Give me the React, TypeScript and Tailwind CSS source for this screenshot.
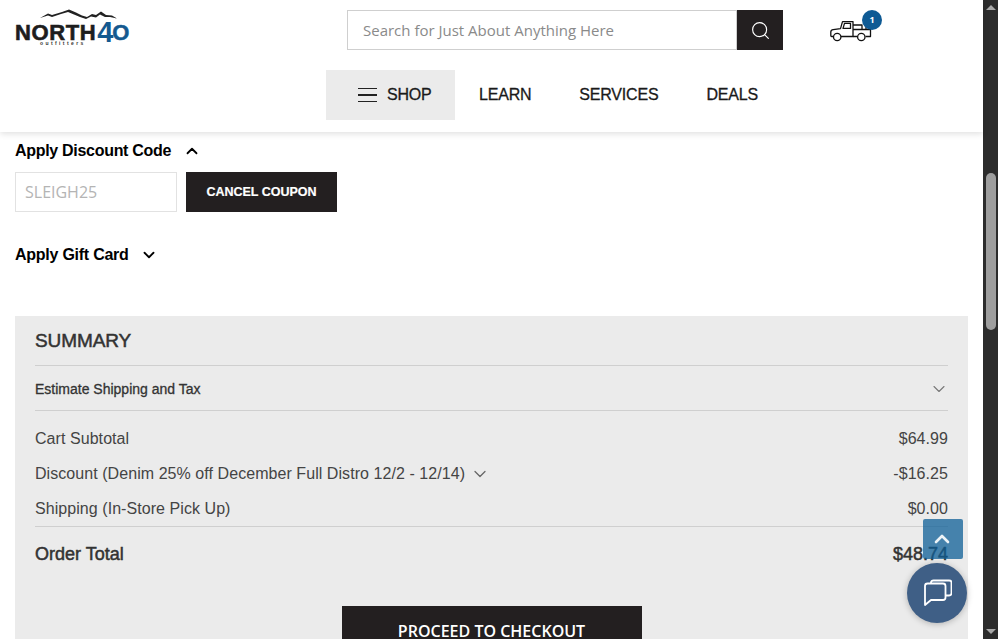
import { ChevronDown, ChevronUp, Search } from "lucide-react";

const SANS = "font-['Liberation_Sans',Arial,sans-serif]";
const OPEN = "font-['Open_Sans',sans-serif]";

function Truck() {
  return (
    <svg width="42" height="22" viewBox="0 0 42 22" fill="none" stroke="#111" strokeWidth="1.3" strokeLinejoin="round">
      <path d="M3.2 16.5H1.6C1 16.5 .8 16 .8 15.5V12C.8 10.6 1.8 9.8 3.2 9.6L10.5 8.6L12.5 1.6H23V16.5H11" />
      <path d="M14.5 3.4L13 8.4H20.5V3.4Z" />
      <path d="M23 5H32V9.5M23 9.5H40.5V16.5H35.5M23 16.5H27" />
      <path d="M36 9.5V7" />
      <circle cx="7.2" cy="17" r="3.7" />
      <circle cx="31.3" cy="17" r="3.7" />
    </svg>
  );
}

function Logo() {
  return (
    <div className="relative h-[36px] w-[116px]">
      <svg className="absolute left-[25px] top-0" width="78" height="10" viewBox="0 0 78 10" fill="#222">
        <path d="M0 9L8 4.5L12 6L22 3L29 0.5L36 3.5L42 6.5L47 8L52 5L56 6L61 2.5L66 6L72 6.5L77 9.5L70 8L65 8L60 5.5L56 8.5L51 7.5L46 10L40 8L34 5.5L28 3L21 5L12 8L8 6.5Z" />
      </svg>
      <div className={`absolute left-0 top-[10px] flex h-[26px] items-center font-bold ${SANS}`}>
        <span className="text-[22px] leading-[17px] tracking-[0.6px] text-[#1d1d1d] [-webkit-text-stroke:0.6px_#1d1d1d]">NORTH</span>
        <span className="ml-[1px] text-[29px] leading-[17px] text-[#14598f]">4</span>
        <span className="ml-[-1px] text-[22px] leading-[17px] text-[#14598f] [-webkit-text-stroke:0.5px_#14598f]">O</span>
      </div>
      <div className={`absolute left-[25px] top-[32px] text-[5px] font-bold leading-[5px] tracking-[2.4px] text-[#333] ${SANS}`}>
        outfitters
      </div>
    </div>
  );
}

const TOTALS = [
  { label: "Cart Subtotal", value: "$64.99" },
  { label: "Discount (Denim 25% off December Full Distro 12/2 - 12/14)", value: "-$16.25", more: true },
  { label: "Shipping (In-Store Pick Up)", value: "$0.00" },
];

export default function App() {
  return (
    <div className={`relative flex h-[639px] w-[998px] overflow-hidden bg-white ${SANS}`}>
      <div className="flex h-full w-[983px] flex-col">
        {/* Header */}
        <header className="z-10 h-[132px] shrink-0 bg-white shadow-[0_2px_6px_rgba(0,0,0,0.12)]">
          <div className="flex h-[70px] items-start">
            <div className="ml-[15px] mt-[9px]">
              <Logo />
            </div>
            <div className="ml-[216px] mt-[10px] flex h-10">
              <div className={`flex w-[390px] items-center border border-[#cfcfcf] bg-white pl-[15px] text-[15px] text-[#8a8a8a] ${OPEN}`}>
                Search for Just About Anything Here
              </div>
              <div className="flex w-[46px] items-center justify-center bg-[#231f20]">
                <Search className="h-[21px] w-[21px] text-white" strokeWidth={1.3} />
              </div>
            </div>
            <div className="relative ml-[47px] mt-[20px]">
              <Truck />
              <div className={`absolute left-[32px] top-[-10px] flex h-5 w-5 items-center justify-center rounded-full bg-[#0e5a94] text-[9px] font-bold text-white ${OPEN}`}>
                1
              </div>
            </div>
          </div>
          <nav className="ml-[326px] flex h-[50px] items-center text-[16px] font-medium tracking-[-0.2px] text-[#1a1a1a] [-webkit-text-stroke:0.3px_#1a1a1a]">
            <div className="flex h-full w-[129px] items-center bg-[#ebebeb] pl-[32px]">
              <div className="flex w-[19px] flex-col gap-[5px]">
                <div className="h-[1.5px] bg-[#222]" />
                <div className="h-[1.5px] bg-[#222]" />
                <div className="h-[1.5px] bg-[#222]" />
              </div>
              <span className="ml-[10px]">SHOP</span>
            </div>
            <span className="ml-[24px]">LEARN</span>
            <span className="ml-[48px]">SERVICES</span>
            <span className="ml-[48px]">DEALS</span>
          </nav>
        </header>

        {/* Coupon and gift card */}
        <div className="px-[15px]">
          <button className="mt-[9px] flex h-5 items-center text-[16px] font-bold tracking-[-0.3px] text-black">
            Apply Discount Code
            <ChevronUp className="ml-[12px] h-[18px] w-[18px]" strokeWidth={2.4} />
          </button>
          <div className="mt-[11px] flex gap-[9px]">
            <div className={`flex h-10 w-[162px] items-center border border-[#e2e2e2] pl-[9px] text-[16px] text-[#b4b4b4] ${OPEN}`}>
              SLEIGH25
            </div>
            <div className="flex h-10 w-[151px] items-center justify-center bg-[#231f20] text-[12.5px] font-bold text-white [-webkit-text-stroke:0.2px_#fff]">
              CANCEL COUPON
            </div>
          </div>
          <button className="mt-[33px] flex h-5 items-center text-[16px] font-bold tracking-[-0.25px] text-black">
            Apply Gift Card
            <ChevronDown className="ml-[11px] h-[18px] w-[18px]" strokeWidth={2.4} />
          </button>
        </div>

        {/* Summary */}
        <section className="mx-[15px] mt-[51px] flex-1 bg-[#ebebeb] px-5 text-[#333]">
          <h2 className="flex h-[49px] items-center text-[19px] leading-none tracking-[-0.1px] text-[#333] [-webkit-text-stroke:0.5px_#333]">SUMMARY</h2>
          <div className="flex h-[46px] items-center justify-between border-y border-[#cfcfcf] pt-[2px]">
            <span className="text-[14px] [-webkit-text-stroke:0.3px_#333]">Estimate Shipping and Tax</span>
            <ChevronDown className="mr-[-1px] h-5 w-5 text-[#777]" strokeWidth={1.3} />
          </div>
          <div className="pt-[10px] text-[16px] tracking-[0.06px] text-[#444]">
            {TOTALS.map((row) => (
              <div key={row.label} className="flex h-[35px] items-center justify-between">
                <span className="flex items-center">
                  {row.label}
                  {row.more && <ChevronDown className="ml-[5px] h-5 w-5 text-[#666]" strokeWidth={1.5} />}
                </span>
                <span>{row.value}</span>
              </div>
            ))}
          </div>
          <div className="flex h-[54px] items-center justify-between border-t border-[#cfcfcf] pt-[2px] text-[18px] font-medium text-[#333] [-webkit-text-stroke:0.5px_#333]">
            <span>Order Total</span>
            <span>$48.74</span>
          </div>
          <div className={`mx-auto mt-[26px] flex h-[50px] w-[300px] items-center justify-center bg-[#231f20] text-[16px] font-semibold text-white ${OPEN}`}>
            PROCEED TO CHECKOUT
          </div>
        </section>
      </div>

      {/* Scrollbar */}
      <div className="flex h-full w-[15px] flex-col items-center bg-[#2c2c2c]">
        <div className="mt-[5px] h-0 w-0 border-x-[5px] border-b-[5px] border-x-transparent border-b-[#a8a8a8]" />
        <div className="mt-[163px] h-[157px] w-[10px] rounded-[5px] bg-[#9e9e9e]" />
        <div className="mt-auto mb-[5px] h-0 w-0 border-x-[5px] border-t-[5px] border-x-transparent border-t-[#a8a8a8]" />
      </div>

      {/* Floating buttons */}
      <div className="absolute left-[923px] top-[519px] flex h-10 w-10 items-center justify-center rounded-[2px] bg-[#0e5f97]/75">
        <ChevronUp className="mr-[2px] h-6 w-6 text-white/90" strokeWidth={2.6} />
      </div>
      <div className="absolute left-[907px] top-[563px] flex h-[60px] w-[60px] items-center justify-center rounded-full bg-[#3f5f86] shadow-[0_1px_6px_rgba(0,0,0,0.25)]">
        <svg width="30" height="30" viewBox="0 0 30 30" fill="none" stroke="#fff" strokeWidth="1.8" strokeLinejoin="round">
          <path d="M3 8C3 6.5 4 5.5 5.5 5.5H21C22.5 5.5 23.5 6.5 23.5 8V19.5C23.5 21 22.5 22 21 22H9L3 27Z" />
          <path d="M9 5.5V4.5C9 3 10 2.5 11.5 2.5H27C28.5 2.5 29.5 3 29.5 4.5V15C29.5 16.5 28.5 17.5 27 17.5H23.5" />
        </svg>
      </div>
    </div>
  );
}
